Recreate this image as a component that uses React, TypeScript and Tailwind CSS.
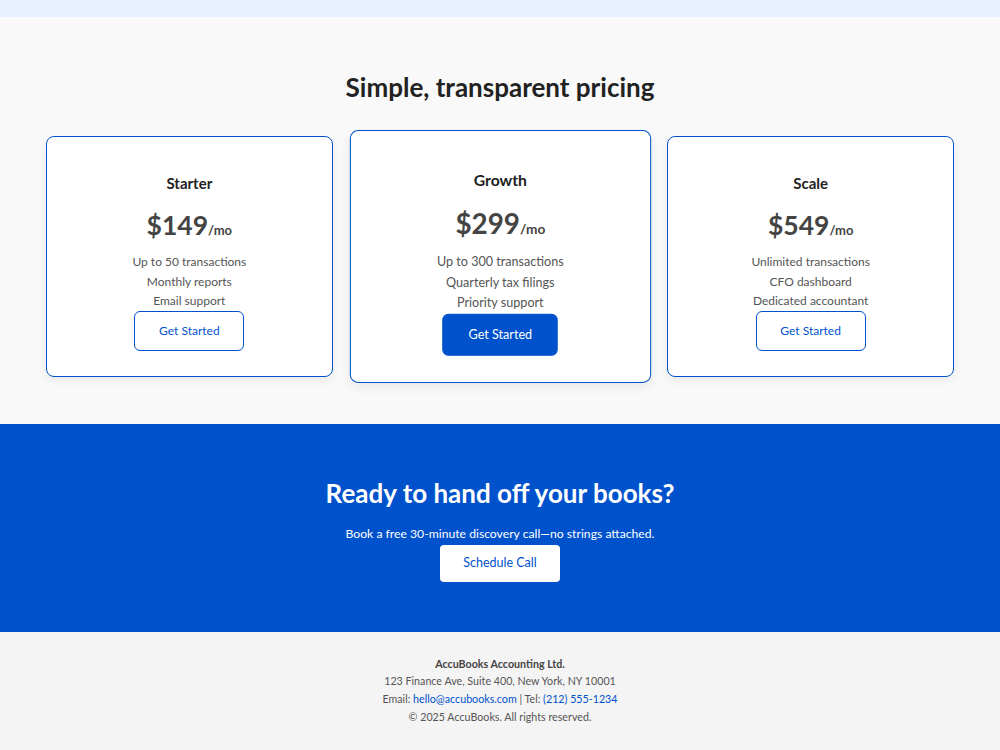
import React from "react";

type Plan = {
  name: string;
  price: string;
  features: string[];
  featured?: boolean;
};

const plans: Plan[] = [
  {
    name: "Starter",
    price: "$149",
    features: ["Up to 50 transactions", "Monthly reports", "Email support"],
  },
  {
    name: "Growth",
    price: "$299",
    features: ["Up to 300 transactions", "Quarterly tax filings", "Priority support"],
    featured: true,
  },
  {
    name: "Scale",
    price: "$549",
    features: ["Unlimited transactions", "CFO dashboard", "Dedicated accountant"],
  },
];

function PlanCard({ plan }: { plan: Plan }) {
  return (
    <div
      className={
        "flex flex-col items-center rounded-lg border-[1.5px] border-[#0052cc] bg-white px-6 pt-[35px] pb-[25px] text-center shadow-[0_4px_10px_rgba(0,0,0,0.06)] " +
        (plan.featured ? "scale-[1.05]" : "")
      }
    >
      <h3 className="text-[15px] font-bold leading-[22px] text-[#222]">{plan.name}</h3>
      <div className="mt-[14px] flex items-baseline leading-[34px] text-[#444]">
        <span className="text-[26.5px] font-bold">{plan.price}</span>
        <span className="text-[13px] font-bold">/mo</span>
      </div>
      <ul className="mt-[5px] text-[12px] leading-[19.5px] text-[#555]">
        {plan.features.map((f) => (
          <li key={f}>{f}</li>
        ))}
      </ul>
      <button
        className={
          "h-[40px] w-[110px] rounded-md border-[1.5px] border-[#0052cc] text-[12px] " +
          (plan.featured ? "bg-[#0052cc] text-white" : "bg-white text-[#0052cc]")
        }
      >
        Get Started
      </button>
    </div>
  );
}

export default function App() {
  return (
    <div className="min-h-[750px] bg-[#f4f4f4] font-['Lato','Noto_Sans',sans-serif]">
      <div className="h-[17px] bg-[#e8f1ff]" />

      <section className="bg-[#f9f9f9] pt-[54px] pb-[47px]">
        <h2 className="text-center text-[26px] font-bold leading-[32px] text-[#222]">
          Simple, transparent pricing
        </h2>
        <div className="mx-auto mt-[33px] grid w-[908px] grid-cols-3 items-center gap-6">
          {plans.map((p) => (
            <PlanCard key={p.name} plan={p} />
          ))}
        </div>
      </section>

      <section className="flex h-[208px] flex-col items-center bg-[#0052cc] pt-[53px] text-center text-white">
        <h2 className="text-[26px] font-bold leading-[32px]">Ready to hand off your books?</h2>
        <p className="mt-[15px] text-[12.2px] leading-[20px]">
          Book a free 30-minute discovery call—no strings attached.
        </p>
        <button className="mt-[1px] h-[37px] w-[120px] rounded bg-white text-[12.5px] text-[#0052cc]">
          Schedule Call
        </button>
      </section>

      <footer className="pt-[23px] pb-[20px] text-center text-[10.7px] leading-[17.7px] text-[#555]">
        <p className="font-bold text-[#444]">AccuBooks Accounting Ltd.</p>
        <p>123 Finance Ave, Suite 400, New York, NY 10001</p>
        <p>
          Email: <a className="text-[#0052cc]">hello@accubooks.com</a> | Tel:{" "}
          <a className="text-[#0052cc]">(212) 555-1234</a>
        </p>
        <p>© 2025 AccuBooks. All rights reserved.</p>
      </footer>
    </div>
  );
}
